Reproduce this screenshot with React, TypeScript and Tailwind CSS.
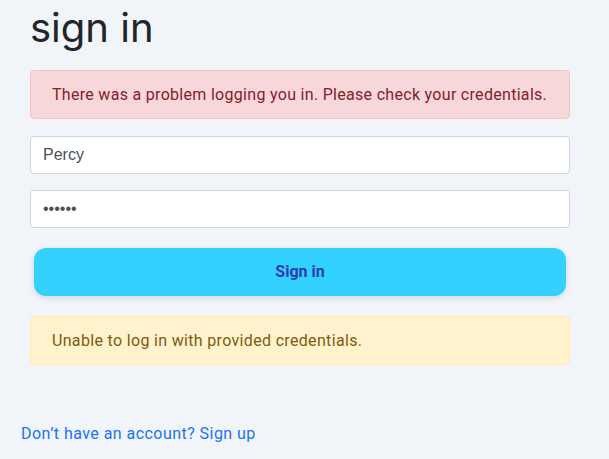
export default function App() {
  return (
    <div className="min-h-[459px] w-full bg-[#f1f4f8] font-['Roboto',sans-serif]">
      <div className="flex flex-col pl-[30px] pt-[4px] w-[570px]">
        <h1 className="font-['Inter',sans-serif] text-[40px] leading-[48px] text-[#212529] mb-[18px]">
          sign in
        </h1>
        <div className="rounded border border-[#f5c2c7] bg-[#f8d7da] px-[21px] py-[12px] text-[16px] leading-[23px] tracking-[0.3px] text-[#842029]">
          There was a problem logging you in. Please check your credentials.
        </div>
        <input
          defaultValue="Percy"
          className="mt-[17px] h-[38px] rounded border border-[#ced4da] bg-white px-[12px] font-['Liberation_Sans',sans-serif] text-[16px] text-[#495057] outline-none"
        />
        <input
          type="password"
          defaultValue="secret"
          className="mt-[16px] h-[38px] rounded border border-[#ced4da] bg-white px-[12px] font-['Liberation_Sans',sans-serif] text-[16px] text-[#495057] outline-none"
        />
        <button className="mx-[4px] mt-[20px] h-[48px] rounded-[12px] bg-[#33d1fe] text-[16px] font-bold text-[#2a3bb4] shadow-[0_2px_6px_rgba(0,0,0,0.12)]">
          Sign in
        </button>
        <div className="mt-[20px] rounded border border-[#ffecb5] bg-[#fff2cc] px-[21px] py-[12px] text-[16px] leading-[23px] tracking-[0.33px] text-[#7d5c10]">
          Unable to log in with provided credentials.
        </div>
      </div>
      <div className="pl-[21px] pt-[57px]">
        <a href="#" className="text-[16px] leading-[24px] tracking-[0.45px] text-[#1a73f0]">
          Don’t have an account? Sign up
        </a>
      </div>
    </div>
  );
}
